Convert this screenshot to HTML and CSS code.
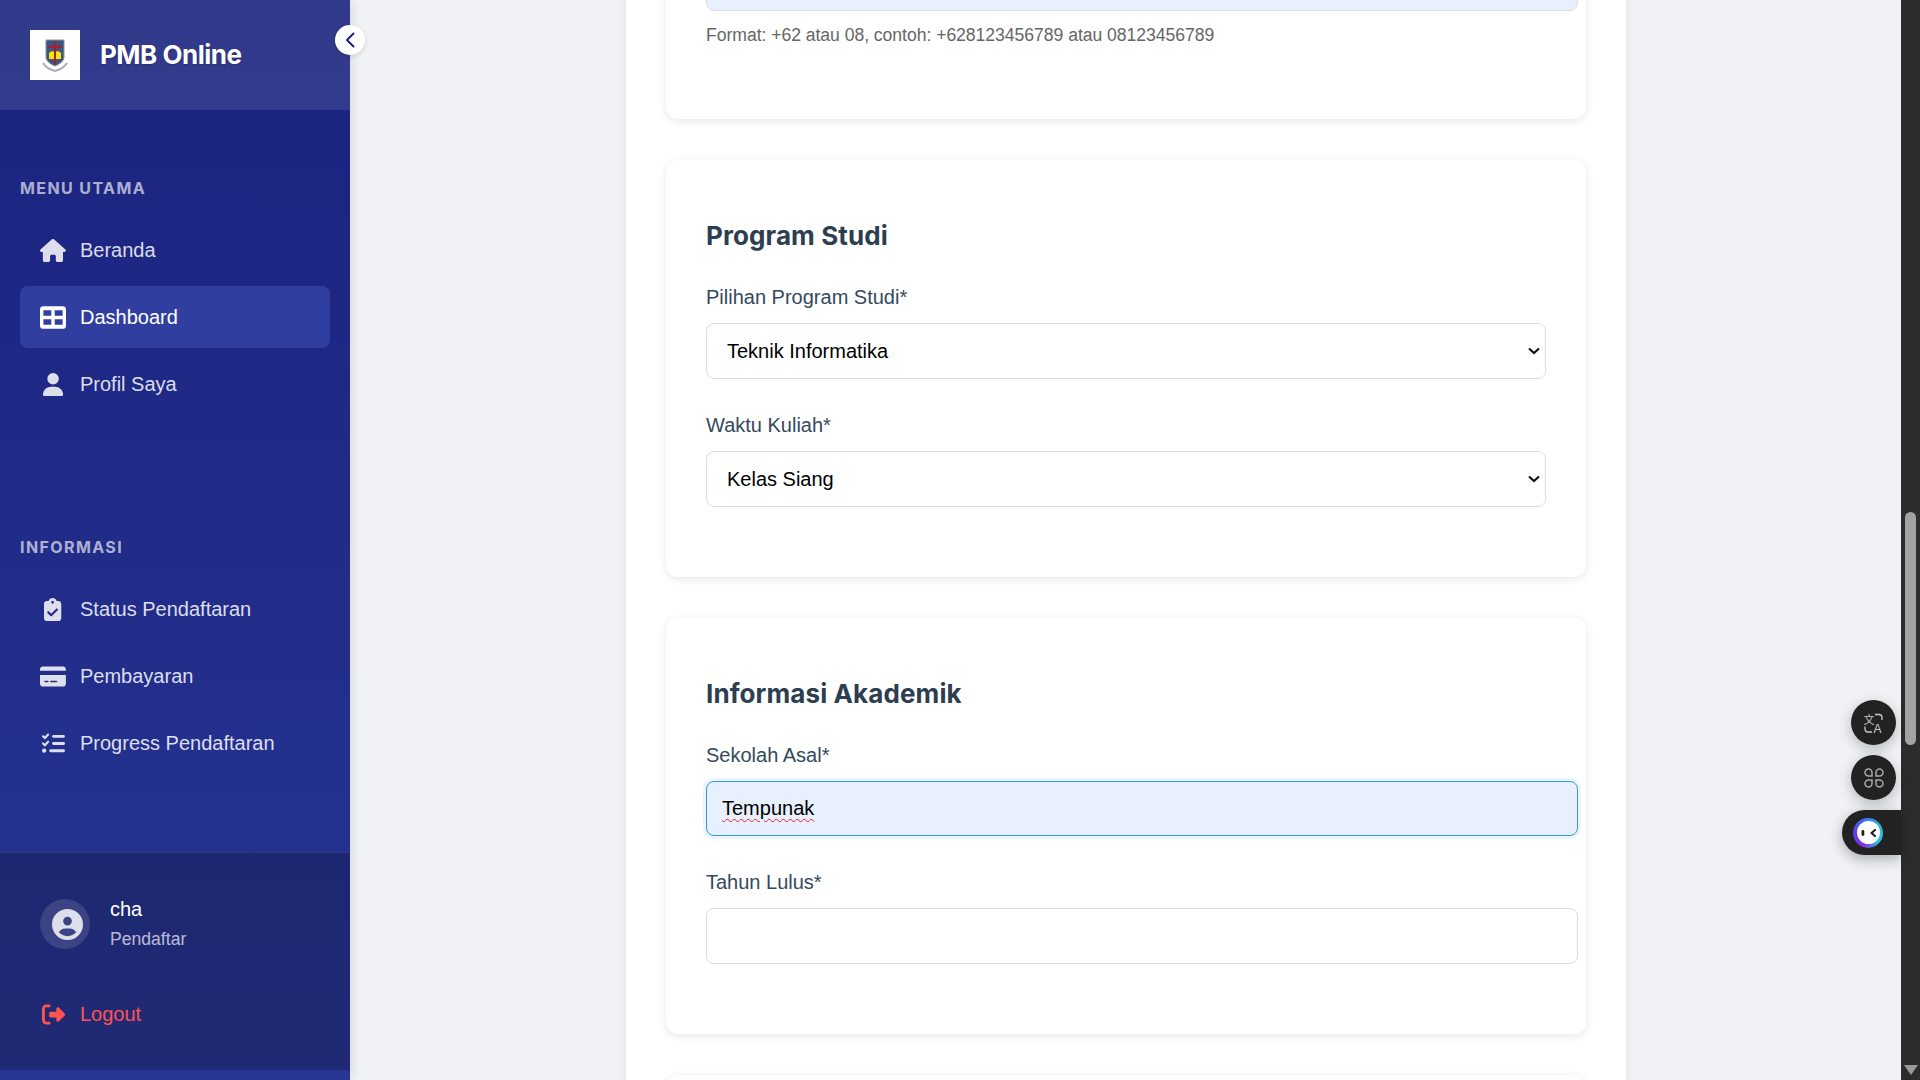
FILE: index.html
```html
<!DOCTYPE html>
<html lang="id">
<head>
<meta charset="utf-8">
<title>PMB Online</title>
<link rel="stylesheet" href="styles.css">
</head>
<body>
<aside class="sidebar">
  <header class="brand">
    <div class="logo">
      <svg width="26" height="34" viewBox="0 0 26 34">
        <path d="M4 2h18v17c0 4-4 7-9 9-5-2-9-5-9-9z" fill="#3d5580" stroke="#8a93a5" stroke-width="1"/>
        <path d="M7 15c2-2 4-2 6-1 2-1 4-1 6 1v6H7z" fill="#f7e600"/>
        <rect x="12" y="3" width="2" height="24" fill="#a3202c"/>
        <rect x="6" y="8" width="14" height="2" fill="#a3202c"/>
        <path d="M1 25c3 5 8 7 12 8 4-1 9-3 12-8" fill="none" stroke="#a8adb5" stroke-width="2"/>
      </svg>
    </div>
    <span class="brand-name">PMB Online</span>
    <button class="toggle" type="button" aria-label="Tutup menu">
      <svg width="12" height="16" viewBox="0 0 12 16"><path d="M9.5 1.5 3 8l6.5 6.5" fill="none" stroke="#1a237e" stroke-width="2" stroke-linecap="round" stroke-linejoin="round"/></svg>
    </button>
  </header>

  <nav class="nav">
    <h4 class="nav-title">MENU UTAMA</h4>
    <a class="nav-item">
      <span class="nav-icon"><svg viewBox="0 0 576 512"><path d="M575.8 255.5c0 18-15 32.1-32 32.1h-32l.7 160.2c0 2.7-.2 5.4-.5 8.1V472c0 22.1-17.9 40-40 40H456c-1.1 0-2.2 0-3.3-.1c-1.4 .1-2.8 .1-4.2 .1H416 392c-22.1 0-40-17.9-40-40V448 384c0-17.7-14.3-32-32-32H256c-17.7 0-32 14.3-32 32v64 24c0 22.1-17.9 40-40 40H160 128.1c-1.5 0-3-.1-4.5-.2c-1.2 .1-2.4 .2-3.6 .2H104c-22.1 0-40-17.9-40-40V360c0-.9 0-1.9 .1-2.8V287.6H32c-18 0-32-14-32-32.1c0-9 3-17 10-24L266.4 8c7-7 15-8 22-8s15 2 21 7L564.8 231.5c8 7 12 15 11 24z"/></svg></span>
      Beranda
    </a>
    <a class="nav-item active">
      <span class="nav-icon"><svg viewBox="0 0 23 20"><path fill-rule="evenodd" d="M3 0h17a3 3 0 0 1 3 3v14a3 3 0 0 1-3 3H3a3 3 0 0 1-3-3V3a3 3 0 0 1 3-3zm0 3.500v5h7v-5zm10 0v5h7v-5zM3 11.500v5h7v-5zm10 0v5h7v-5z"/></svg></span>
      Dashboard
    </a>
    <a class="nav-item">
      <span class="nav-icon"><svg viewBox="0 0 448 512"><path d="M224 256A128 128 0 1 0 224 0a128 128 0 1 0 0 256zm-45.700 48C79.800 304 0 383.800 0 482.300C0 498.700 13.300 512 29.700 512H418.300c16.400 0 29.700-13.300 29.700-29.700C448 383.800 368.200 304 269.700 304H178.300z"/></svg></span>
      Profil Saya
    </a>

    <h4 class="nav-title second">INFORMASI</h4>
    <a class="nav-item">
      <span class="nav-icon"><svg viewBox="0 0 384 512"><path d="M192 0c-41.800 0-77.400 26.700-90.500 64H64C28.700 64 0 92.700 0 128V448c0 35.300 28.700 64 64 64H320c35.300 0 64-28.700 64-64V128c0-35.300-28.700-64-64-64H282.500C269.400 26.700 233.800 0 192 0zm0 64a32 32 0 1 1 0 64 32 32 0 1 1 0-64zM305 273L177 401c-9.400 9.400-24.600 9.400-33.900 0L79 337c-9.400-9.400-9.400-24.600 0-33.900s24.600-9.400 33.900 0l47 47L271 239c9.400-9.400 24.600-9.400 33.900 0s9.400 24.600 0 33.900z"/></svg></span>
      Status Pendaftaran
    </a>
    <a class="nav-item">
      <span class="nav-icon"><svg viewBox="0 0 576 512"><path d="M64 32C28.700 32 0 60.700 0 96v32H576V96c0-35.300-28.700-64-64-64H64zM576 224H0V416c0 35.300 28.700 64 64 64H512c35.300 0 64-28.700 64-64V224zM112 352h64c8.800 0 16 7.200 16 16s-7.200 16-16 16H112c-8.800 0-16-7.200-16-16s7.200-16 16-16zm112 16c0-8.800 7.200-16 16-16H368c8.800 0 16 7.200 16 16s-7.200 16-16 16H240c-8.800 0-16-7.200-16-16z"/></svg></span>
      Pembayaran
    </a>
    <a class="nav-item">
      <span class="nav-icon"><svg viewBox="0 0 512 512"><path d="M152.100 38.200c9.900 8.900 10.700 24 1.800 33.900l-72 80c-4.400 4.900-10.600 7.800-17.200 7.900s-12.900-2.400-17.600-7L7 113C-2.300 103.600-2.300 88.400 7 79s24.600-9.400 33.900 0l22.100 22.100 55.100-61.200c8.900-9.900 24-10.700 33.900-1.800zm0 160c9.900 8.900 10.700 24 1.800 33.900l-72 80c-4.400 4.900-10.600 7.800-17.200 7.900s-12.900-2.400-17.600-7L7 273c-9.400-9.400-9.400-24.600 0-33.900s24.600-9.400 33.900 0l22.100 22.100 55.100-61.200c8.900-9.900 24-10.700 33.900-1.800zM224 96c0-17.700 14.300-32 32-32H480c17.700 0 32 14.300 32 32s-14.300 32-32 32H256c-17.700 0-32-14.300-32-32zm0 160c0-17.700 14.300-32 32-32H480c17.700 0 32 14.300 32 32s-14.300 32-32 32H256c-17.700 0-32-14.300-32-32zM160 416c0-17.700 14.300-32 32-32H480c17.700 0 32 14.300 32 32s-14.300 32-32 32H192c-17.700 0-32-14.300-32-32zM48 368a48 48 0 1 1 0 96 48 48 0 1 1 0-96z"/></svg></span>
      Progress Pendaftaran
    </a>
  </nav>

  <footer class="side-footer">
    <div class="user">
      <div class="avatar">
        <svg width="31" height="31" viewBox="0 0 512 512"><path d="M399 384.200C376.900 345.800 335.400 320 288 320H224c-47.400 0-88.900 25.800-111 64.200c35.200 39.200 86.200 63.800 143 63.800s107.800-24.700 143-63.800zM0 256a256 256 0 1 1 512 0A256 256 0 1 1 0 256zm256 16a72 72 0 1 0 0-144 72 72 0 1 0 0 144z"/></svg>
      </div>
      <div class="user-info">
        <div class="user-name">cha</div>
        <div class="user-role">Pendaftar</div>
      </div>
    </div>
    <a class="logout">
      <span class="nav-icon"><svg viewBox="0 0 512 512"><path d="M377.900 105.900L500.700 228.700c7.200 7.200 11.300 17.100 11.300 27.300s-4.100 20.100-11.300 27.300L377.900 406.100c-6.400 6.400-15 9.900-24 9.900c-18.700 0-33.900-15.200-33.900-33.900l0-62.100-128 0c-17.700 0-32-14.300-32-32l0-64c0-17.700 14.300-32 32-32l128 0 0-62.100c0-18.700 15.200-33.900 33.900-33.900c9 0 17.600 3.600 24 9.900zM160 96L96 96c-17.700 0-32 14.300-32 32l0 256c0 17.700 14.300 32 32 32l64 0c17.700 0 32 14.300 32 32s-14.300 32-32 32l-64 0c-53 0-96-43-96-96L0 128C0 75 43 32 96 32l64 0c17.700 0 32 14.300 32 32s-14.300 32-32 32z"/></svg></span>
      Logout
    </a>
  </footer>
</aside>

<main class="main">
  <div class="sheet">
    <section class="card">
      <div class="group">
        <div class="field filled"></div>
        <p class="help">Format: +62 atau 08, contoh: +628123456789 atau 08123456789</p>
      </div>
    </section>

    <section class="card">
      <h3 class="card-title">Program Studi</h3>
      <div class="group">
        <label class="label">Pilihan Program Studi*</label>
        <select class="select"><option>Teknik Informatika</option></select>
      </div>
      <div class="group">
        <label class="label">Waktu Kuliah*</label>
        <select class="select"><option>Kelas Siang</option></select>
      </div>
    </section>

    <section class="card">
      <h3 class="card-title">Informasi Akademik</h3>
      <div class="group">
        <label class="label">Sekolah Asal*</label>
        <div class="field focused" role="textbox"><span class="misspelled">Tempunak</span></div>
      </div>
      <div class="group">
        <label class="label">Tahun Lulus*</label>
        <div class="field" role="textbox"></div>
      </div>
    </section>

    <section class="card card-next"></section>
  </div>
</main>

<div class="scrollbar">
  <div class="thumb"></div>
  <div class="arrow-down"></div>
</div>

<div class="floaters">
  <div class="float-btn">
    <svg width="24" height="24" viewBox="0 0 24 24">
      <text x="1.500" y="12.500" class="ft-cjk">文</text>
      <text x="11.500" y="21.500" class="ft-lat">A</text>
      <path d="M13 3.500h4a3 3 0 0 1 3 3V9M10 21H6a3 3 0 0 1-3-3v-2.500" fill="none" stroke="#c9c9c9" stroke-width="1.300"/>
    </svg>
  </div>
  <div class="float-btn">
    <svg width="24" height="24" viewBox="0 0 24 24" fill="none" stroke="#a9a9a9" stroke-width="1.500">
      <path d="M6.500 3h0A3.500 3.500 0 0 1 10 6.500V10H6.500a3.500 3.500 0 0 1 0-7z"/>
      <path d="M17.500 3A3.500 3.500 0 0 1 17.500 10H14V6.500A3.500 3.500 0 0 1 17.500 3z"/>
      <path d="M6.500 14H10v3.500A3.500 3.500 0 1 1 6.500 14z"/>
      <path d="M14 14h3.500A3.500 3.500 0 1 1 14 17.500z"/>
    </svg>
  </div>
  <div class="float-pill">
    <div class="mascot">
      <div class="mascot-face">
        <svg width="30" height="30" viewBox="0 0 30 30">
          <rect x="8.500" y="12" width="2.800" height="6" rx="1.400" fill="#222"/>
          <path d="M22 12 18.500 15l3.500 3" fill="none" stroke="#222" stroke-width="2.200" stroke-linecap="round" stroke-linejoin="round"/>
        </svg>
      </div>
    </div>
  </div>
</div>
</body>
</html>
```
FILE: styles.css
```css
* { box-sizing: border-box; }
html, body { height: 100%; }
body {
  margin: 0;
  display: flex;
  overflow: hidden;
  height: 100vh;
  background: #f0f2f5;
  font-family: "Liberation Sans", Arial, sans-serif;
  color: #2c3e50;
  font-size: 20px;
}

/* Sidebar */
.sidebar {
  position: relative;
  z-index: 2;
  flex: 0 0 350px;
  display: flex;
  flex-direction: column;
  padding-bottom: 10px;
  background: linear-gradient(180deg, #1a237e 0%, #283593 100%);
  box-shadow: 2px 0 10px rgba(0, 0, 0, 0.1);
}
.brand {
  position: relative;
  flex: 0 0 110px;
  display: flex;
  align-items: center;
  gap: 20px;
  padding: 0 30px;
  background: rgba(255, 255, 255, 0.1);
}
.logo {
  width: 50px;
  height: 50px;
  background: #fff;
  display: flex;
  align-items: center;
  justify-content: center;
}
.brand-name {
  margin-top: -2px;
  font-family: Inter, "Liberation Sans", sans-serif;
  font-weight: 700;
  font-size: 26px;
  letter-spacing: -0.5px;
  color: #fff;
  text-shadow: 0 1px 2px rgba(0, 0, 0, 0.25);
}
.toggle {
  position: absolute;
  right: -15px;
  top: 25px;
  width: 30px;
  height: 30px;
  border: 0;
  padding: 0;
  border-radius: 50%;
  background: #fff;
  box-shadow: 0 2px 5px rgba(0, 0, 0, 0.12);
  display: flex;
  align-items: center;
  justify-content: center;
}
.nav {
  flex: 1;
  padding: 65px 20px 0;
}
.nav-title {
  margin: 0 0 18px;
  font-family: Inter, "Liberation Sans", sans-serif;
  font-size: 16px;
  line-height: 26px;
  font-weight: 700;
  letter-spacing: 1.400px;
  color: rgba(255, 255, 255, 0.65);
}
.nav-title.second { margin-top: 119px; }
.nav-item {
  display: flex;
  align-items: center;
  height: 62px;
  margin-bottom: 5px;
  padding-left: 20px;
  border-radius: 8px;
  color: rgba(255, 255, 255, 0.85);
}
.nav-item.active {
  background: #303f9f;
  color: #fff;
}
.nav-icon {
  flex: 0 0 26px;
  margin-right: 14px;
  height: 24px;
  display: flex;
  align-items: center;
  justify-content: center;
}
.nav-icon svg {
  height: 23px;
  max-width: 26px;
  fill: currentColor;
  display: block;
}
.side-footer {
  flex: 0 0 218px;
  padding: 44px 40px 0;
  background: rgba(0, 0, 0, 0.2);
  border-top: 1px solid rgba(255, 255, 255, 0.07);
}
.user {
  display: flex;
  align-items: center;
  gap: 20px;
}
.avatar {
  width: 50px;
  height: 50px;
  border-radius: 50%;
  background: rgba(255, 255, 255, 0.13);
  display: flex;
  align-items: center;
  justify-content: flex-start;
  padding-left: 12px;
}
.avatar svg { fill: #dcdfea; display: block; }
.user-name { color: #fff; line-height: 24px; }
.user-role {
  color: rgba(255, 255, 255, 0.7);
  font-size: 17.600px;
  line-height: 24px;
  margin-top: 6px;
}
.logout {
  display: flex;
  align-items: center;
  height: 30px;
  margin-top: 48px;
  color: #ff5252;
}

/* Main */
.main {
  flex: 1;
  min-width: 0;
  overflow: hidden;
  padding-left: 1px;
}
.sheet {
  width: 1000px;
  margin: -85px auto 0;
  padding: 0 40px;
  background: #fff;
  box-shadow: 0 0 10px rgba(0, 0, 0, 0.08);
  min-height: 1300px;
}
.card {
  background: #fff;
  border-radius: 12px;
  padding: 40px 40px 40px;
  margin-bottom: 41px;
  box-shadow: 0 2px 8px rgba(0, 0, 0, 0.1);
}
.card:first-child { padding-bottom: 41px; }
.card-next { min-height: 300px; }
.card-title {
  margin: 18px 0 28px;
  font-family: Inter, "Liberation Sans", sans-serif;
  font-size: 26px;
  line-height: 36px;
  font-weight: 700;
  letter-spacing: 0.100px;
  color: #2c3e50;
}
.group { margin-bottom: 30px; }
.group + .group { padding-top: 1px; }
.label {
  display: block;
  margin-bottom: 11px;
  line-height: 30px;
  font-size: 20px;
  color: #34495e;
}
.select {
  display: block;
  width: 100%;
  height: 56px;
  padding: 0 40px 0 20px;
  border: 1px solid #ddd;
  border-radius: 8px;
  appearance: none;
  background: #fff url("data:image/svg+xml,%3Csvg xmlns='http://www.w3.org/2000/svg' width='12' height='8' viewBox='0 0 12 8'%3E%3Cpath d='M1 1.500l5 4.500 5-4.500' fill='none' stroke='%23111' stroke-width='2.200'/%3E%3C/svg%3E") no-repeat right 5px center;
  color: #000;
  font: 20px "Liberation Sans", Arial, sans-serif;
}
.field {
  box-sizing: content-box;
  width: 100%;
  height: 23.500px;
  padding: 15px 15px;
  border: 1px solid #ddd;
  border-radius: 8px;
  background: #fff;
  color: #000;
  line-height: 23px;
}
.field.filled { background: #e8f0fe; }
.field.focused {
  background: #e8f0fe;
  border-color: #3498db;
  box-shadow: 0 0 0 3px rgba(52, 152, 219, 0.1);
}
.misspelled {
  text-decoration: underline wavy #e8202a 1px;
  text-underline-offset: 3px;
}
.help {
  margin: 11px 0 0;
  font-size: 17.600px;
  line-height: 26px;
  letter-spacing: -0.04px;
  color: #666;
}

/* Scrollbar */
.scrollbar {
  position: relative;
  z-index: 3;
  flex: 0 0 19px;
  display: flex;
  flex-direction: column;
  align-items: center;
  background: #2c2c2c;
}
.thumb {
  width: 11px;
  height: 233px;
  margin-top: 512px;
  border-radius: 6px;
  background: #a3a3a3;
}
.arrow-down {
  margin-top: auto;
  margin-bottom: 5px;
  border-left: 7px solid transparent;
  border-right: 7px solid transparent;
  border-top: 10px solid #9a9a9a;
}

/* Floating widgets */
.floaters {
  position: absolute;
  z-index: 4;
  top: 700px;
  right: 19px;
  display: flex;
  flex-direction: column;
  align-items: flex-end;
  gap: 10px;
}
.float-btn {
  width: 45px;
  height: 45px;
  margin-right: 5px;
  border-radius: 50%;
  background: #222;
  box-shadow: 0 4px 14px rgba(0, 0, 0, 0.25);
  display: flex;
  align-items: center;
  justify-content: center;
}
.ft-cjk {
  font-family: "Noto Sans CJK SC", sans-serif;
  font-size: 11px;
  fill: #c9c9c9;
}
.ft-lat {
  font-family: "Liberation Sans", sans-serif;
  font-size: 12px;
  fill: #c9c9c9;
}
.float-pill {
  width: 59px;
  height: 45px;
  border-radius: 23px 0 0 23px;
  background: #222;
  box-shadow: 0 4px 14px rgba(0, 0, 0, 0.3);
  display: flex;
  align-items: center;
  padding-left: 11px;
}
.mascot {
  width: 30px;
  height: 30px;
  border-radius: 50%;
  background: conic-gradient(from 200deg, #8a2be2, #5b3df0, #3f6ff0, #2fb5e0, #29c5d8, #8a2be2);
  display: flex;
  align-items: center;
  justify-content: center;
}
.mascot-face {
  width: 23px;
  height: 23px;
  border-radius: 50%;
  background: #fff;
  overflow: hidden;
  display: flex;
  align-items: center;
  justify-content: center;
}
.mascot-face svg { flex: none; }
```
